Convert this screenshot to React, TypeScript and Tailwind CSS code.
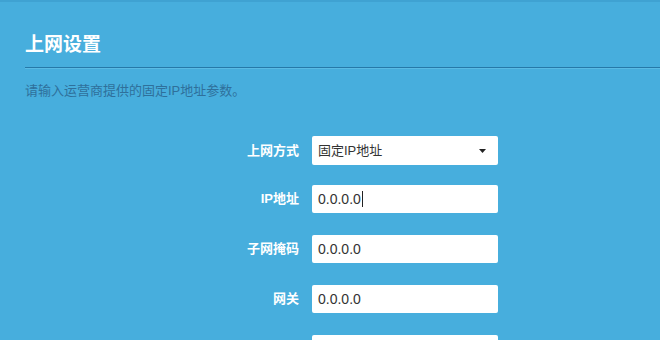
import React from 'react';

const fields = [
  { label: '子网掩码', value: '0.0.0.0' },
  { label: '网关', value: '0.0.0.0' },
  { label: '首选DNS服务器', value: '0.0.0.0' },
];

const font = "font-['Liberation_Sans','Noto_Sans_CJK_SC',sans-serif]";

export default function App() {
  return (
    <div className={`w-[660px] h-[340px] overflow-hidden bg-[#47aedd] border-t-2 border-[#3fa2d2] ${font}`}>
      <div className="pl-[25px] pt-[31px]">
        <h1 className="text-[19px] leading-[24px] font-bold text-white">上网设置</h1>
        <div className="mt-[10px] h-px bg-[#2679a8] shadow-[0_1px_0_#5bbbe4]" />
        <p className="mt-[15px] text-[13px] leading-[16px] text-[#2f709b]">请输入运营商提供的固定IP地址参数。</p>
      </div>

      <div className="mt-[37px] flex flex-col">
        <div className="flex items-center">
          <label className="w-[299px] text-right text-[13px] font-bold text-white">上网方式</label>
          <div className="ml-[13px] w-[186px] h-[29px] bg-white rounded-[2px] flex items-center justify-between pl-[6px] pr-[12px] text-[13px] text-[#333]">
            <span>固定IP地址</span>
            <svg width="7" height="4" viewBox="0 0 7 4">
              <path d="M0 0h7L3.5 4z" fill="#222" />
            </svg>
          </div>
        </div>

        <div className="flex items-center mt-[20px]">
          <label className="w-[299px] text-right text-[13px] font-bold text-white">IP地址</label>
          <div className="ml-[13px] w-[186px] h-[28px] bg-white rounded-[2px] flex items-center pl-[6px] text-[14px] text-[#333]">
            <span>0.0.0.0</span>
            <span className="ml-px w-px h-[16px] bg-[#222]" />
          </div>
        </div>

        {fields.map((f) => (
          <div key={f.label} className="flex items-center mt-[22px]">
            <label className="w-[299px] text-right text-[13px] font-bold text-white">{f.label}</label>
            <div className="ml-[13px] w-[186px] h-[28px] bg-white rounded-[2px] flex items-center pl-[6px] text-[14px] text-[#333]">
              {f.value}
            </div>
          </div>
        ))}
      </div>
    </div>
  );
}
